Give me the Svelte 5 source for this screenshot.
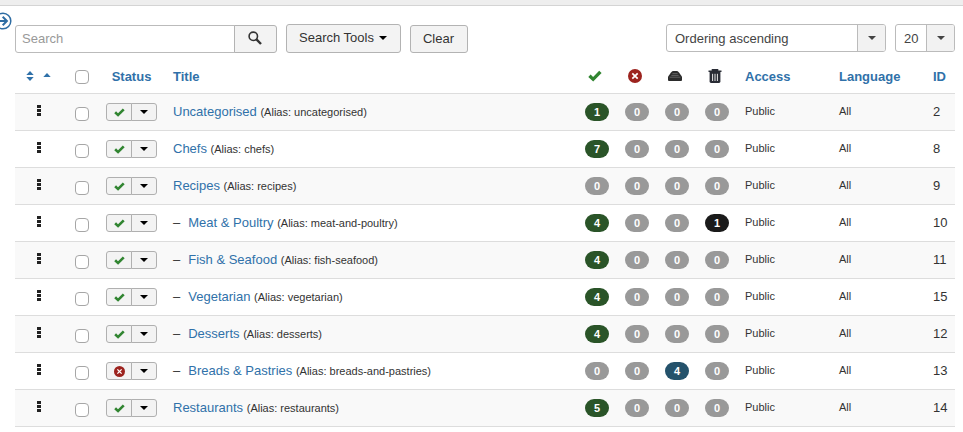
<script>
  const rows = [
    { title: 'Uncategorised', alias: 'uncategorised', level: 0, on: true, counts: [1, 0, 0, 0], id: 2 },
    { title: 'Chefs', alias: 'chefs', level: 0, on: true, counts: [7, 0, 0, 0], id: 8 },
    { title: 'Recipes', alias: 'recipes', level: 0, on: true, counts: [0, 0, 0, 0], id: 9 },
    { title: 'Meat & Poultry', alias: 'meat-and-poultry', level: 1, on: true, counts: [4, 0, 0, 1], id: 10 },
    { title: 'Fish & Seafood', alias: 'fish-seafood', level: 1, on: true, counts: [4, 0, 0, 0], id: 11 },
    { title: 'Vegetarian', alias: 'vegetarian', level: 1, on: true, counts: [4, 0, 0, 0], id: 15 },
    { title: 'Desserts', alias: 'desserts', level: 1, on: true, counts: [4, 0, 0, 0], id: 12 },
    { title: 'Breads & Pastries', alias: 'breads-and-pastries', level: 1, on: false, counts: [0, 0, 4, 0], id: 13 },
    { title: 'Restaurants', alias: 'restaurants', level: 0, on: true, counts: [5, 0, 0, 0], id: 14 }
  ];
  const kinds = ['published', 'unpublished', 'archived', 'trashed'];
</script>

{#snippet check(size)}
  <svg width={size} height={size} viewBox="0 0 14 14" aria-hidden="true">
    <path d="M0.3 7.9 L2.6 5.5 L5.1 7.9 L11.2 1.8 L13.6 4 L5.2 12.4 Z" fill="#318531" />
  </svg>
{/snippet}

{#snippet cross(size)}
  <svg width={size} height={size} viewBox="0 0 14 14" aria-hidden="true">
    <circle cx="7" cy="7" r="7" fill="#9c231e" />
    <path d="M4.3 4.3 L9.7 9.7 M9.7 4.3 L4.3 9.7" stroke="#fff" stroke-width="1.7" />
  </svg>
{/snippet}

{#snippet caret()}
  <svg class="caret" width="8" height="4" viewBox="0 0 8 4" aria-hidden="true">
    <path d="M0 0 H8 L4 4 Z" fill="currentColor" />
  </svg>
{/snippet}

<div class="strip"></div>
<main>
  <button class="toggle" aria-label="Show sidebar">
    <svg width="18" height="18" viewBox="0 0 18 18" fill="none" stroke="#2f6da3">
      <circle cx="9" cy="9" r="7.8" stroke-width="1.5" />
      <path d="M3.5 9 H12.5 M8.7 4.8 L12.9 9 L8.7 13.2" stroke-width="2" />
    </svg>
  </button>

  <form class="filters" onsubmit={(e) => e.preventDefault()}>
    <div class="search">
      <input type="text" placeholder="Search" aria-label="Search" />
      <button class="btn find" aria-label="Search">
        <svg width="14" height="14" viewBox="0 0 14 14" fill="none" stroke="#333">
          <circle cx="5.3" cy="5.3" r="4.2" stroke-width="1.6" />
          <path d="M8.2 8.2 L13 13" stroke-width="2.4" />
        </svg>
      </button>
    </div>
    <button class="btn tools" type="button">Search Tools {@render caret()}</button>
    <button class="btn" type="button">Clear</button>
    <div class="pick order">
      <select aria-label="Ordering"><option>Ordering ascending</option></select>
      <span class="arrow">{@render caret()}</span>
    </div>
    <div class="pick limit">
      <select aria-label="Items per page"><option>20</option></select>
      <span class="arrow">{@render caret()}</span>
    </div>
  </form>

  <table>
    <colgroup>
      <col class="c-order" /><col class="c-check" /><col class="c-status" /><col />
      {#each kinds as kind (kind)}<col class="c-count" />{/each}
      <col class="c-wide" /><col class="c-wide" /><col class="c-id" />
    </colgroup>
    <thead>
      <tr>
        <th class="mid">
          <a href="#order" class="sort" aria-label="Ordering">
            <svg width="8" height="10" viewBox="0 0 8 10"><path d="M0.3 4 L4 0 L7.7 4 Z M0.3 6 L4 10 L7.7 6 Z" fill="currentColor" /></svg>
            <svg width="8" height="10" viewBox="0 0 8 10"><path d="M0.3 6 L4 2 L7.7 6 Z" fill="currentColor" /></svg>
          </a>
        </th>
        <th class="mid"><input type="checkbox" aria-label="Check all" /></th>
        <th class="mid"><a href="#status">Status</a></th>
        <th><a href="#title">Title</a></th>
        <th class="icon" aria-label="Published">{@render check(14)}</th>
        <th class="icon" aria-label="Unpublished">{@render cross(14)}</th>
        <th class="icon" aria-label="Archived">
          <svg width="14" height="14" viewBox="0 0 14 14">
            <path d="M0 7.8 L3 3.4 Q4.2 2 5.4 2 H8.6 Q9.8 2 11 3.4 L14 7.8 V11 Q14 12 13 12 H1 Q0 12 0 11 Z" fill="#2b2b2b" />
            <path d="M4.4 4.6 H9.6 M3.4 6.4 H10.6 M1.6 8.2 H12.4" stroke="#777" stroke-width="0.7" />
          </svg>
        </th>
        <th class="icon" aria-label="Trashed">
          <svg width="14" height="14" viewBox="0 0 14 14">
            <path d="M4.5 1.6 V0.6 H9.5 V1.6 M0.5 2.3 H13.5" fill="none" stroke="#292c35" stroke-width="1.6" />
            <path d="M1.6 3 H12.4 V12.6 Q12.4 14 11 14 H3 Q1.6 14 1.6 12.6 Z" fill="#292c35" />
            <path d="M4.6 4.8 V12 M7 4.8 V12 M9.4 4.8 V12" stroke="#e8e8e8" stroke-width="1" />
          </svg>
        </th>
        <th><a href="#access">Access</a></th>
        <th><a href="#language">Language</a></th>
        <th><a href="#id">ID</a></th>
      </tr>
    </thead>
    <tbody>
      {#each rows as row (row.id)}
        <tr>
          <td class="mid">
            <svg class="grip" width="4" height="12" viewBox="0 0 4 12" aria-hidden="true">
              <path d="M0 0 H4 V3 H0 Z M0 4 H4 V7 H0 Z M0 8 H4 V11 H0 Z" fill="#222" />
            </svg>
          </td>
          <td class="mid pick-row"><input type="checkbox" aria-label={'Select ' + row.title} /></td>
          <td class="mid">
            <div class="group">
              <button aria-label={row.on ? 'Unpublish' : 'Publish'}>
                {#if row.on}{@render check(11)}{:else}{@render cross(11)}{/if}
              </button>
              <button aria-label="More actions">{@render caret()}</button>
            </div>
          </td>
          <td>
            {#if row.level}<span class="dash">–</span>{/if}<a href={'#' + row.alias}>{row.title}</a>
            <small>(Alias: {row.alias})</small>
          </td>
          {#each row.counts as count, i}
            <td class="count"><a href={'#' + kinds[i]} class={['badge', count > 0 && kinds[i]]}>{count}</a></td>
          {/each}
          <td class="note">Public</td>
          <td class="note">All</td>
          <td>{row.id}</td>
        </tr>
      {/each}
    </tbody>
  </table>
</main>

<style>
  :global(body) {
    background: #fff;
  }
  .strip {
    height: 5px;
    background: #eee;
    border-bottom: 1px solid #d4d4d4;
  }
  main {
    position: relative;
    padding: 18px 8px 0 15px;
    overflow: hidden;
    color: #333;
    font: 13px/18px 'Liberation Sans', Arial, sans-serif;
  }
  button,
  input,
  select {
    box-sizing: border-box;
    margin: 0;
    color: inherit;
    font: inherit;
  }
  svg {
    display: block;
  }
  a {
    color: #3071a9;
    text-decoration: none;
  }
  .toggle {
    position: absolute;
    left: -6px;
    top: 6px;
    padding: 0;
    border: 0;
    background: none;
  }
  .filters {
    display: flex;
    align-items: flex-end;
    gap: 9px;
    height: 29px;
  }
  .search {
    display: flex;
  }
  .search input {
    width: 220px;
    height: 28px;
    padding: 0 6px 2px;
    border: 1px solid #bbb;
    border-radius: 3px 0 0 3px;
    background: #fff;
  }
  .search input::placeholder {
    color: #999;
  }
  .btn {
    display: flex;
    align-items: center;
    gap: 4px;
    height: 28px;
    padding: 0 13px 1px 12px;
    border: 1px solid #b3b3b3;
    border-radius: 3px;
    background: #f3f3f3;
    white-space: nowrap;
  }
  .find {
    width: 43px;
    margin-left: -1px;
    padding: 0 13px 2px;
    border-radius: 0 3px 3px 0;
  }
  .tools {
    height: 29px;
    gap: 5px;
  }
  .btn .caret,
  .group .caret {
    color: #000;
  }
  .pick {
    position: relative;
    align-self: flex-start;
    height: 28px;
  }
  .order {
    width: 220px;
    margin-left: auto;
  }
  .limit {
    width: 60px;
  }
  .pick select {
    appearance: none;
    width: 100%;
    height: 28px;
    padding: 1px 28px 0 8px;
    border: 1px solid #bbb;
    border-radius: 3px;
    background: #fff;
    color: #444;
  }
  .arrow {
    position: absolute;
    top: 1px;
    right: 1px;
    bottom: 1px;
    display: flex;
    align-items: center;
    justify-content: center;
    width: 27px;
    border-left: 1px solid #bbb;
    border-radius: 0 2px 2px 0;
    background: #f2f2f2;
    color: #444;
    pointer-events: none;
  }
  table {
    width: 100%;
    margin-top: 7px;
    border-collapse: separate;
    border-spacing: 0;
    table-layout: fixed;
  }
  .c-order {
    width: 47px;
  }
  .c-check {
    width: 40px;
  }
  .c-status {
    width: 63px;
  }
  .c-count {
    width: 40px;
  }
  .c-wide {
    width: 94px;
  }
  .c-id {
    width: 30px;
  }
  th,
  td {
    box-sizing: border-box;
    height: 37px;
    padding: 0 8px;
    border-bottom: 1px solid #ddd;
    text-align: left;
    vertical-align: middle;
    white-space: nowrap;
  }
  th {
    height: 34px;
  }
  th.mid,
  td.mid {
    padding: 0 4px;
    text-align: center;
  }
  th.mid:nth-child(3),
  td.mid:nth-child(3) {
    padding-right: 8px;
  }
  th.icon {
    padding: 0 8px 2px 11px;
  }
  tbody tr:nth-child(odd) td {
    background: #f9f9f9;
  }
  .sort {
    display: flex;
    justify-content: center;
    gap: 9px;
    margin-bottom: 2px;
  }
  input[type='checkbox'] {
    appearance: none;
    display: block;
    width: 14px;
    height: 14px;
    margin: 0 auto;
    border: 1px solid #a6a6a6;
    border-radius: 4px;
    background: #fff;
  }
  td.pick-row {
    padding-top: 4px;
  }
  .grip {
    margin: 0 auto 2px;
  }
  .group {
    display: flex;
    width: 51px;
    height: 18px;
  }
  .group button {
    display: flex;
    flex: 1;
    align-items: center;
    justify-content: center;
    padding: 0;
    border: 1px solid #b0b0b0;
    border-radius: 3px 0 0 3px;
    background: #f3f3f3;
  }
  .group button + button {
    margin-left: -1px;
    border-radius: 0 3px 3px 0;
  }
  .dash {
    margin-right: 8px;
  }
  small {
    font-size: 11px;
  }
  .badge {
    display: block;
    box-sizing: border-box;
    width: 24px;
    height: 18px;
    border-radius: 9px;
    background: #999;
    color: #fff;
    font-size: 11px;
    font-weight: bold;
    text-align: center;
  }
  .published {
    background: #2a5428;
  }
  .unpublished {
    background: #9c231e;
  }
  .archived {
    background: #24526b;
  }
  .trashed {
    background: #1a1a1a;
  }
  .note {
    padding-bottom: 2px;
    font-size: 11px;
  }
</style>
